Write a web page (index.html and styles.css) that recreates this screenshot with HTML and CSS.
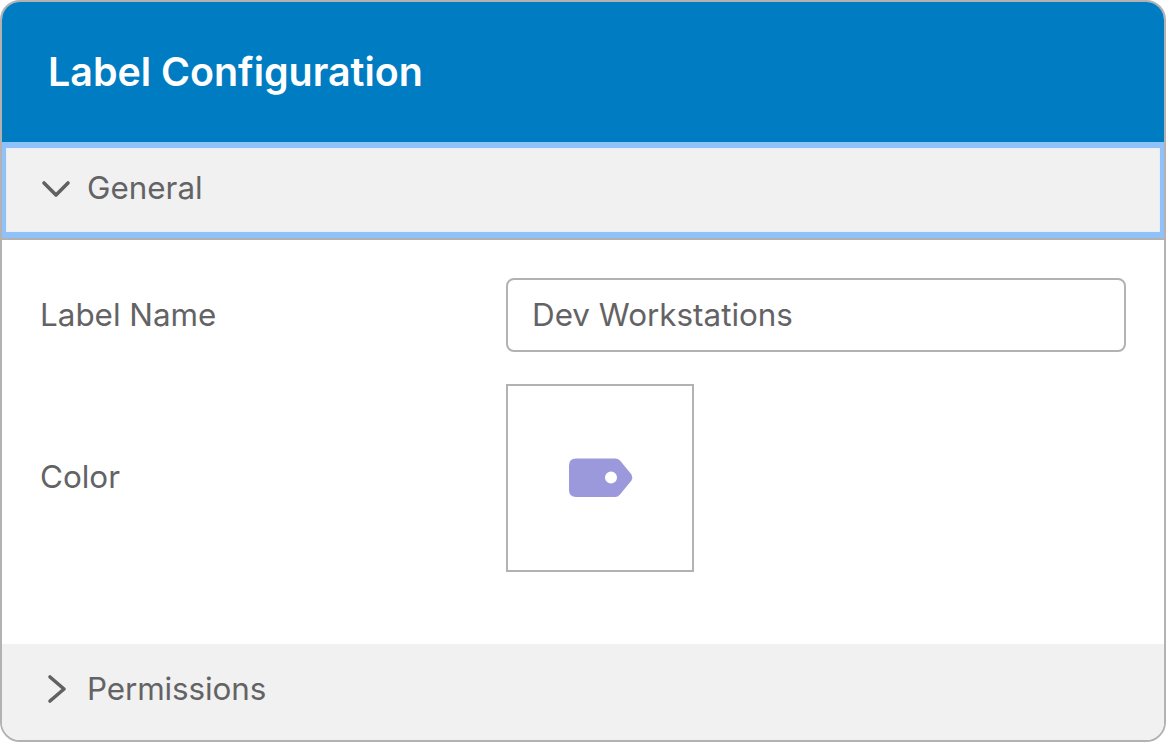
FILE: index.html
```html
<!DOCTYPE html>
<html lang="en">
<head>
<meta charset="utf-8">
<title>Label Configuration</title>
<link rel="stylesheet" href="styles.css">
</head>
<body>
<main class="card">
  <header class="card-header"><h1 class="card-title">Label Configuration</h1></header>
  <section class="section">
    <div class="section-head section-head-focus">
      <svg class="chev chev-down" viewBox="0 0 30 20" aria-hidden="true"><path d="M3 4 L15 16 L27 4"/></svg>
      <span class="section-title">General</span>
    </div>
    <div class="section-body">
      <div class="field field-name">
        <label class="field-label">Label Name</label>
        <div class="text-input">Dev Workstations</div>
      </div>
      <div class="field">
        <label class="field-label">Color</label>
        <div class="swatch">
          <svg class="tag" viewBox="0 0 66 40" aria-hidden="true"><path fill-rule="evenodd" d="M9 0.5 H48 Q51 0.5 53 2.5 L64.5 16.5 Q66 19.5 64.5 22.5 L53 36.5 Q51 39 48 39 H9 Q2 39 2 32 V7.5 Q2 0.5 9 0.5 Z M38 19.5 A6 6 0 1 0 50 19.5 A6 6 0 1 0 38 19.5 Z"/></svg>
        </div>
      </div>
    </div>
  </section>
  <section class="section-last">
    <div class="section-head section-head-plain">
      <svg class="chev chev-right" viewBox="0 0 20 30" aria-hidden="true"><path d="M3 3 L17 15 L3 27"/></svg>
      <span class="section-title section-title-tight">Permissions</span>
    </div>
  </section>
</main>
</body>
</html>
```
FILE: styles.css
```css
* { box-sizing: border-box; }
html, body { margin: 0; padding: 0; background: #fff; }
body { font-family: Inter, "Liberation Sans", sans-serif; color: #636366; }
.card {
  width: 1166px;
  height: 742px;
  border: 2px solid #b3b1b1;
  border-radius: 20px;
  overflow: hidden;
  display: flex;
  flex-direction: column;
  background: #fff;
}
.card-header {
  height: 140px;
  flex: none;
  background: #007cc2;
  display: flex;
  align-items: center;
  padding: 2px 0 0 46px;
}
.card-title { margin: 0; font-size: 39.4px; font-weight: 600; color: #fff; line-height: 1; }
.section { flex: 1; display: flex; flex-direction: column; }
.section-head { display: flex; align-items: center; background: #f1f1f1; }
.section-head-focus {
  height: 96px;
  flex: none;
  border: solid #90c2f9;
  border-width: 6px 4px;
  box-shadow: inset 0 0 0 1px #e9eef3;
  position: relative;
  margin-bottom: 2px;
  padding-bottom: 2px;
}
.section-head-focus::after {
  content: "";
  position: absolute;
  left: -4px;
  right: -4px;
  bottom: -8px;
  height: 2px;
  background: #b3b1b1;
}
.section-head-plain { height: 96px; padding-bottom: 4px; }
.section-title { font-size: 31.4px; line-height: 1; }
.section-title-tight { letter-spacing: -0.1px; }
.chev { fill: none; stroke: #616161; stroke-width: 3.6; stroke-linecap: round; stroke-linejoin: round; flex: none; }
.chev-down { width: 30px; height: 20px; margin-left: 35px; margin-right: 16px; }
.chev-right { width: 20px; height: 30px; margin: 0 20px 2px 45px; }
.section-body { padding: 38px 38px 72px 38px; display: flex; flex-direction: column; gap: 32px; }
.field { display: flex; align-items: center; }
.field-label { width: 466px; flex: none; font-size: 31.4px; line-height: 1; }
.field-name .field-label { padding-top: 2px; }
.text-input {
  flex: 1;
  height: 74px;
  border: 2px solid #b3b1b1;
  border-radius: 8px;
  padding-left: 24px;
  display: flex;
  align-items: center;
  font-size: 31.4px;
  background: #fff;
}
.swatch {
  width: 188px;
  height: 188px;
  border: 2px solid #b3b1b1;
  display: flex;
  align-items: center;
  justify-content: center;
}
.tag { width: 66px; height: 40px; fill: #9b99dc; }
```
